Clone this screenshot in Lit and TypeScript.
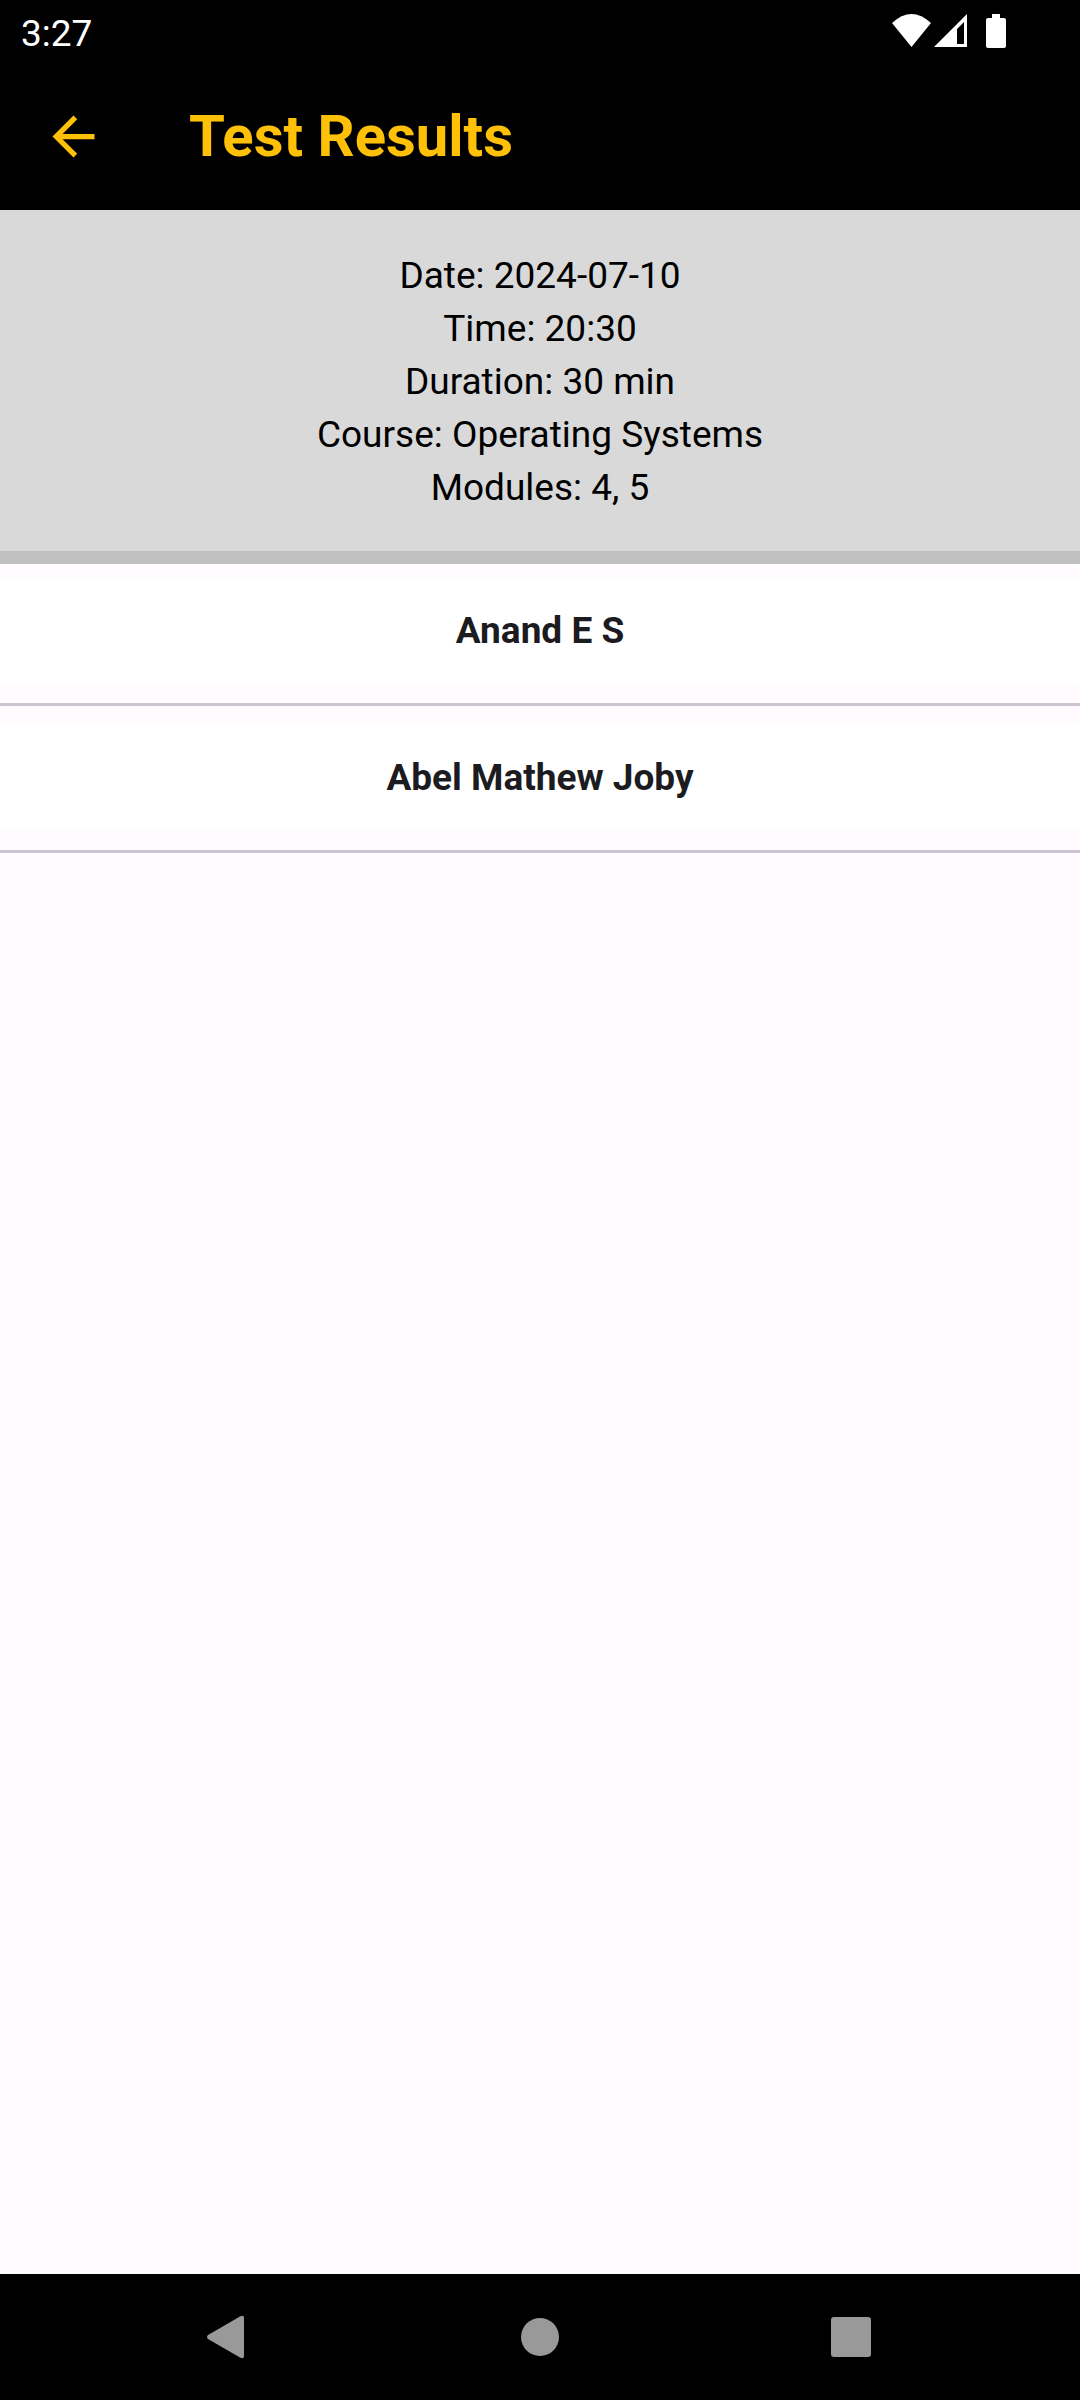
import { LitElement, html, css, svg } from "lit";
import { customElement, state } from "lit/decorators.js";

interface Detail {
  label: string;
  value: string;
}

@customElement("status-bar")
class StatusBar extends LitElement {
  static styles = css`
    :host {
      display: flex;
      align-items: center;
      justify-content: space-between;
      height: 63px;
      padding: 0 70px 0 21px;
      background: #000;
      color: #fff;
      font-size: 37px;
      line-height: 44px;
    }
    .clock {
      padding-top: 4px;
    }
    .icons {
      display: block;
    }
  `;

  render() {
    return html`
      <time class="clock">3:27</time>
      <svg class="icons" width="120" height="63" viewBox="0 0 120 63" fill="#fff" role="img" aria-label="Wi-Fi, signal and battery">
        <path d="M2 23Q21.500 5 41 23L21.500 47Z" />
        <path fill-rule="evenodd" d="M44 47L77 14V47ZM67 44H74V22L67 29Z" />
        <path d="M102 14H110V18H114Q116 18 116 20V46Q116 48 114 48H98Q96 48 96 46V20Q96 18 98 18H102Z" />
      </svg>
    `;
  }
}

@customElement("app-bar")
class AppBar extends LitElement {
  static styles = css`
    :host {
      display: flex;
      align-items: center;
      gap: 53px;
      height: 147px;
      padding-left: 10px;
      background: #000;
      color: #ffc107;
    }
    .back {
      display: flex;
      align-items: center;
      justify-content: center;
      width: 126px;
      height: 126px;
      padding: 0;
      border: 0;
      border-radius: 50%;
      background: none;
      color: inherit;
    }
    .title {
      margin: 0;
      padding-bottom: 2px;
      font-size: 58px;
      line-height: 74px;
      font-weight: 700;
    }
  `;

  render() {
    return html`
      <button class="back" aria-label="Back">
        <svg width="63" height="63" viewBox="0 0 24 24" fill="currentColor">
          <path d="M20 11H7.830l5.590-5.590L12 4l-8 8 8 8 1.410-1.410L7.830 13H20v-2z" />
        </svg>
      </button>
      <h1 class="title">Test Results</h1>
    `;
  }
}

@customElement("nav-bar")
class NavBar extends LitElement {
  static styles = css`
    :host {
      display: flex;
      justify-content: center;
      gap: 185px;
      height: 126px;
      background: #000;
    }
    .key {
      display: flex;
      align-items: center;
      justify-content: center;
      width: 126px;
      height: 100%;
      padding: 0;
      border: 0;
      background: none;
    }
  `;

  private key(label: string, shape: unknown) {
    return html`<button class="key" aria-label=${label}>
      <svg width="64" height="64" viewBox="0 0 64 64" fill="#999">${shape}</svg>
    </button>`;
  }

  render() {
    return html`
      ${this.key("Back", svg`<path d="M11 30L43 11.500Q47 9.500 47 13V51Q47 54.500 43 52.500L11 34Q9 32 11 30Z" />`)}
      ${this.key("Home", svg`<circle cx="32" cy="32" r="19" />`)}
      ${this.key("Overview", svg`<rect x="12" y="12" width="40" height="40" rx="3" />`)}
    `;
  }
}

@customElement("app-root")
class AppRoot extends LitElement {
  static styles = css`
    :host {
      display: flex;
      flex-direction: column;
      min-height: 100vh;
      background: #fffbff;
      font-family: Roboto, "Noto Sans", sans-serif;
    }
    .details {
      padding: 39px 42px 37px;
      border-bottom: 13px solid #c0c0c0;
      background: #d9d9d9;
      color: #000;
      font-size: 37px;
      line-height: 53px;
      text-align: center;
    }
    .line {
      margin: 0;
    }
    .results {
      flex: 1;
      margin: 0;
      padding: 0;
      list-style: none;
    }
    .result {
      padding: 19px 0 20px;
      border-bottom: 3px solid #cac4d0;
    }
    .result:first-child {
      padding-top: 14px;
    }
    .name {
      display: block;
      padding: 26px 42px;
      background: #fff;
      color: #1c1b1f;
      font-size: 37px;
      line-height: 53px;
      font-weight: 700;
      text-align: center;
      text-decoration: none;
    }
  `;

  @state() private details: Detail[] = [
    { label: "Date", value: "2024-07-10" },
    { label: "Time", value: "20:30" },
    { label: "Duration", value: "30 min" },
    { label: "Course", value: "Operating Systems" },
    { label: "Modules", value: "4, 5" },
  ];

  @state() private students = ["Anand E S", "Abel Mathew Joby"];

  render() {
    return html`
      <status-bar></status-bar>
      <app-bar></app-bar>
      <section class="details">
        ${this.details.map((d) => html`<p class="line">${d.label}: ${d.value}</p>`)}
      </section>
      <ul class="results">
        ${this.students.map((s) => html`<li class="result"><a class="name" href="#">${s}</a></li>`)}
      </ul>
      <nav-bar></nav-bar>
    `;
  }
}
